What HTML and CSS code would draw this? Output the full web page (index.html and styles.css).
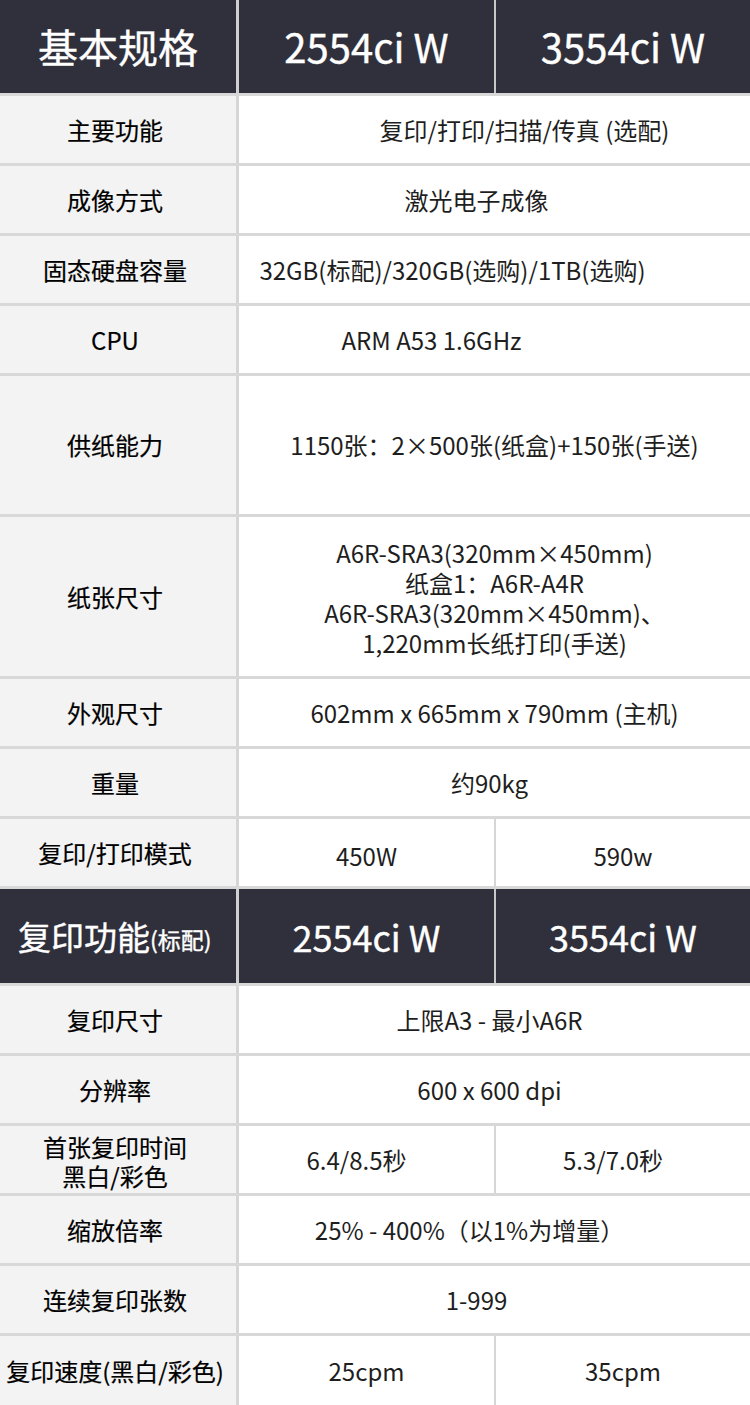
FILE: index.html
```html
<!DOCTYPE html>
<html lang="zh-CN">
<head>
<meta charset="utf-8">
<title>基本规格</title>
<link rel="stylesheet" href="styles.css">
</head>
<body>
<div class="spec">
  <div class="row head head-1">
    <div class="cell label">基本规格</div>
    <div class="cell mid">2554ci W</div>
    <div class="cell">3554ci W</div>
  </div>
  <div class="row">
    <div class="cell label">主要功能</div>
    <div class="cell span shift-r30">复印/打印/扫描/传真 (选配)</div>
  </div>
  <div class="row">
    <div class="cell label">成像方式</div>
    <div class="cell span shift-l18">激光电子成像</div>
  </div>
  <div class="row">
    <div class="cell label">固态硬盘容量</div>
    <div class="cell span shift-l42">32GB(标配)/320GB(选购)/1TB(选购)</div>
  </div>
  <div class="row">
    <div class="cell label">CPU</div>
    <div class="cell span shift-l63">ARM A53 1.6GHz</div>
  </div>
  <div class="row row-tall">
    <div class="cell label">供纸能力</div>
    <div class="cell span">1150张：2×500张(纸盒)+150张(手送)</div>
  </div>
  <div class="row row-xtall">
    <div class="cell label">纸张尺寸</div>
    <div class="cell span multi">A6R-SRA3(320mm×450mm)<br>纸盒1：A6R-A4R<br>A6R-SRA3(320mm×450mm)、<br>1,220mm长纸打印(手送)</div>
  </div>
  <div class="row">
    <div class="cell label">外观尺寸</div>
    <div class="cell span">602mm x 665mm x 790mm (主机)</div>
  </div>
  <div class="row">
    <div class="cell label">重量</div>
    <div class="cell span shift-l5">约90kg</div>
  </div>
  <div class="row">
    <div class="cell label">复印/打印模式</div>
    <div class="cell mid low">450W</div>
    <div class="cell low">590w</div>
  </div>
  <div class="row head head-2">
    <div class="cell label">复印功能<small>(标配)</small></div>
    <div class="cell mid">2554ci W</div>
    <div class="cell">3554ci W</div>
  </div>
  <div class="row">
    <div class="cell label">复印尺寸</div>
    <div class="cell span shift-l5">上限A3 - 最小A6R</div>
  </div>
  <div class="row">
    <div class="cell label">分辨率</div>
    <div class="cell span shift-l5">600 x 600 dpi</div>
  </div>
  <div class="row">
    <div class="cell label multi-label">首张复印时间<br>黑白/彩色</div>
    <div class="cell mid shift-l10">6.4/8.5秒</div>
    <div class="cell shift-l10">5.3/7.0秒</div>
  </div>
  <div class="row">
    <div class="cell label">缩放倍率</div>
    <div class="cell span shift-l31">25% - 400%（以1%为增量）</div>
  </div>
  <div class="row">
    <div class="cell label">连续复印张数</div>
    <div class="cell span shift-l18">1-999</div>
  </div>
  <div class="row row-last">
    <div class="cell label">复印速度(黑白/彩色)</div>
    <div class="cell mid">25cpm</div>
    <div class="cell">35cpm</div>
  </div>
</div>
</body>
</html>
```

FILE: styles.css
```css
html, body {
  margin: 0;
  padding: 0;
  background: #ffffff;
}

body {
  width: 750px;
  font-family: "Noto Sans CJK SC", "Noto Sans", sans-serif;
  color: #1a1a1a;
}

.spec {
  display: flex;
  flex-direction: column;
  width: 750px;
}

.row {
  display: grid;
  grid-template-columns: 239px 257px 1fr;
  height: 70px;
  box-sizing: border-box;
  border-bottom: 3px solid #d8d8d8;
}

.row-tall { height: 141px; }
.row-xtall { height: 162px; }
.row-last { height: 69px; border-bottom: 0; }

.cell {
  display: flex;
  align-items: center;
  justify-content: center;
  text-align: center;
  font-size: 24px;
  line-height: 30px;
  font-weight: 400;
  color: #1e1e1e;
  background: #ffffff;
  box-sizing: border-box;
  white-space: nowrap;
}

.label {
  background: #f3f3f3;
  border-right: 3px solid #d6d6d6;
  font-weight: 400;
  color: #000000;
  padding-right: 6px;
  -webkit-text-stroke: 0.2px #000000;
}

.multi-label { line-height: 29px; padding-top: 2px; }

.mid {
  border-right: 2px solid #d6d6d6;
}

.span {
  grid-column: 2 / 4;
}

.multi { line-height: 30px; padding-top: 2px; }

.low { padding-top: 6px; }

.shift-r30 { padding-left: 60px; }
.shift-l5 { padding-right: 10px; }
.shift-l10 { padding-right: 20px; }
.shift-l18 { padding-right: 36px; }
.shift-l31 { padding-right: 50px; }
.shift-l42 { padding-right: 84px; }
.shift-l63 { padding-right: 126px; }

.head {
  background: #2f303b;
  border-bottom-color: #d8d8d8;
}

.head .cell {
  background: #2f303b;
  color: #ffffff;
  font-weight: 400;
  -webkit-text-stroke: 0.4px #ffffff;
}

.head .label {
  border-right-color: #d0d0d0;
  padding-right: 0;
}

.head .mid {
  border-right-color: #c8c8c8;
}

.head-1 { height: 96px; }
.head-1 .cell { font-size: 40px; padding-bottom: 2px; }

.head-2 { height: 97px; }
.head-2 .cell { font-size: 36px; }
.head-2 .label { font-size: 33px; justify-content: flex-start; padding-left: 18px; }
.head-2 .label small { font-size: 23px; padding-top: 6px; }
```
